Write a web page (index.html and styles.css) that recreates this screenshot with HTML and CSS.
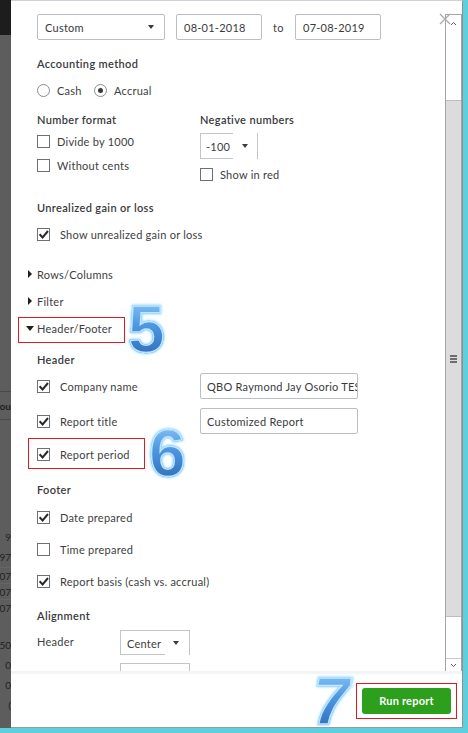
FILE: index.html
```html
<!DOCTYPE html>
<html>
<head>
<meta charset="utf-8">
<link rel="stylesheet" href="styles.css">
</head>
<body>
<div class="screen">
  <div class="bgpage">
    <div class="bg-top"></div>
    <div class="bg-gap g1"></div>
    <div class="bg-row tall bold"><span>Amou</span></div>
    <div class="bg-gap g2"></div>
    <div class="bg-row"><span>9</span></div>
    <div class="bg-row"><span>97</span></div>
    <div class="bg-row line"><span>07</span></div>
    <div class="bg-row line"><span>07</span></div>
    <div class="bg-row line"><span>07</span></div>
    <div class="bg-gap g3"></div>
    <div class="bg-row"><span>350</span></div>
    <div class="bg-row"><span>0</span></div>
    <div class="bg-row"><span>0</span></div>
    <div class="bg-row"><span>(</span></div>
  </div>

  <div class="modal">
    <div class="modal-body">
      <div class="content">
        <div class="date-row">
          <div class="field select-period"><span class="grow">Custom</span><i class="caret"></i></div>
          <div class="field date">08-01-2018</div>
          <span class="to">to</span>
          <div class="field date">07-08-2019</div>
        </div>

        <div class="line heading sp-acct">Accounting method</div>
        <div class="line radios sp-radio">
          <span class="radio first"><span class="rb"></span>Cash</span>
          <span class="radio"><span class="rb on"></span>Accrual</span>
        </div>

        <div class="cols sp-num">
          <div class="col-left">
            <div class="line heading">Number format</div>
            <div class="line check tight sp-6">
              <svg class="cb" viewBox="0 0 13 13"><rect x=".5" y=".5" width="12" height="12" fill="#fff" stroke="#6f7075"/></svg>Divide by 1000
            </div>
            <div class="line check tight sp-8">
              <svg class="cb" viewBox="0 0 13 13"><rect x=".5" y=".5" width="12" height="12" fill="#fff" stroke="#6f7075"/></svg>Without cents
            </div>
          </div>
          <div class="col-right">
            <div class="line heading">Negative numbers</div>
            <div class="neg-select sp-6"><span class="ns-text">-100</span><span class="ns-arrow"><i class="caret"></i></span></div>
            <div class="line check tight sp-7">
              <svg class="cb" viewBox="0 0 13 13"><rect x=".5" y=".5" width="12" height="12" fill="#fff" stroke="#6f7075"/></svg>Show in red
            </div>
          </div>
        </div>

        <div class="line heading sp-17">Unrealized gain or loss</div>
        <div class="line check sp-11">
          <svg class="cb" viewBox="0 0 13 13"><rect x=".5" y=".5" width="12" height="12" fill="#fff" stroke="#6f7075"/><path d="M2.6 6.2 5.6 9.4 11 3" fill="none" stroke="#2a2a2a" stroke-width="2"/></svg>Show unrealized gain or loss
        </div>

        <div class="line toggle sp-24"><i class="tri-right"></i>Rows/Columns</div>
        <div class="line toggle sp-11"><i class="tri-right"></i>Filter</div>
        <div class="line toggle open sp-11"><i class="tri-down"></i>Header/Footer</div>

        <div class="line heading sp-15">Header</div>
        <div class="input-row sp-6">
          <div class="check">
            <svg class="cb" viewBox="0 0 13 13"><rect x=".5" y=".5" width="12" height="12" fill="#fff" stroke="#6f7075"/><path d="M2.6 6.2 5.6 9.4 11 3" fill="none" stroke="#2a2a2a" stroke-width="2"/></svg>Company name
          </div>
          <div class="field text-input">QBO Raymond Jay Osorio TEST Company</div>
        </div>
        <div class="input-row sp-9">
          <div class="check">
            <svg class="cb" viewBox="0 0 13 13"><rect x=".5" y=".5" width="12" height="12" fill="#fff" stroke="#6f7075"/><path d="M2.6 6.2 5.6 9.4 11 3" fill="none" stroke="#2a2a2a" stroke-width="2"/></svg>Report title
          </div>
          <div class="field text-input">Customized Report</div>
        </div>
        <div class="line check sp-12">
          <svg class="cb" viewBox="0 0 13 13"><rect x=".5" y=".5" width="12" height="12" fill="#fff" stroke="#6f7075"/><path d="M2.6 6.2 5.6 9.4 11 3" fill="none" stroke="#2a2a2a" stroke-width="2"/></svg>Report period
        </div>

        <div class="line heading sp-19">Footer</div>
        <div class="line check sp-12">
          <svg class="cb" viewBox="0 0 13 13"><rect x=".5" y=".5" width="12" height="12" fill="#fff" stroke="#6f7075"/><path d="M2.6 6.2 5.6 9.4 11 3" fill="none" stroke="#2a2a2a" stroke-width="2"/></svg>Date prepared
        </div>
        <div class="line check sp-16">
          <svg class="cb" viewBox="0 0 13 13"><rect x=".5" y=".5" width="12" height="12" fill="#fff" stroke="#6f7075"/></svg>Time prepared
        </div>
        <div class="line check sp-16">
          <svg class="cb" viewBox="0 0 13 13"><rect x=".5" y=".5" width="12" height="12" fill="#fff" stroke="#6f7075"/><path d="M2.6 6.2 5.6 9.4 11 3" fill="none" stroke="#2a2a2a" stroke-width="2"/></svg>Report basis (cash vs. accrual)
        </div>

        <div class="line heading sp-18">Alignment</div>
        <div class="align-row sp-7">
          <span class="align-label">Header</span>
          <div class="align-select"><span class="as-text">Center</span><span class="as-arrow"><i class="caret"></i></span></div>
        </div>
        <div class="align-row sp-8">
          <span class="align-label"></span>
          <div class="align-select"><span class="as-text"></span><span class="as-arrow"></span></div>
        </div>
      </div>

      <div class="scrollbar">
        <div class="sb-up"><svg viewBox="0 0 15 16" width="15" height="16"><path d="M5 10 7.5 7.5 10 10" fill="none" stroke="#606060" stroke-width="1"/></svg></div>
        <div class="sb-space top"></div>
        <div class="sb-thumb"><span class="grip"></span><span class="grip"></span><span class="grip"></span></div>
        <div class="sb-space bottom"></div>
        <div class="sb-down"><svg viewBox="0 0 15 12" width="15" height="12"><path d="M5 5 7.5 7.5 10 5" fill="none" stroke="#606060" stroke-width="1"/></svg></div>
      </div>
    </div>

    <div class="modal-footer">
      <div class="run-wrap"><button class="run">Run report</button></div>
    </div>

    <svg class="close" viewBox="0 0 12 12" width="12" height="12"><path d="M1 1 11 11 M11 1 1 11" stroke="#a9abae" stroke-width="1.4" fill="none"/></svg>

    <span class="mark mark-hf"></span>
    <span class="mark mark-rp"></span>
    <span class="num num-5">5</span>
    <span class="num num-6">6</span>
    <span class="num num-7">7</span>
  </div>

  <div class="cyan-r"></div>
  <div class="cyan-b"></div>
</div>
</body>
</html>
```

FILE: styles.css
```css
* { box-sizing: border-box; }
html, body { margin: 0; padding: 0; }
body {
  width: 468px;
  height: 733px;
  overflow: hidden;
  font-family: Lato, "Liberation Sans", sans-serif;
  font-size: 11px;
  letter-spacing: 0.25px;
  color: #3d3e41;
  background: #5ecfdc;
}
.screen {
  display: grid;
  grid-template-columns: 11px 452px 5px;
  grid-template-rows: 728px 5px;
  width: 468px;
  height: 733px;
}

/* page behind the modal */
.bgpage {
  grid-column: 1;
  grid-row: 1;
  background: #5d5d5d;
  display: flex;
  flex-direction: column;
  overflow: hidden;
  font-size: 10px;
  letter-spacing: 0;
  color: #1f1f1f;
}
.bg-top { height: 35px; background: #1d1d1d; flex: none; }
.bg-gap { flex: none; }
.bg-gap.g1 { height: 356px; }
.bg-gap.g2 { height: 107px; }
.bg-gap.g3 { height: 20px; }
.bg-row {
  height: 20px;
  flex: none;
  display: flex;
  justify-content: flex-end;
  align-items: center;
  overflow: hidden;
  white-space: nowrap;
}
.bg-row.tall { height: 29px; border-top: 1px solid #4a4a4a; border-bottom: 1px solid #4a4a4a; }
.bg-row.bold { font-weight: 700; }
.bg-row.line { border-top: 1px solid #666; }

.cyan-r { grid-column: 3; grid-row: 1; background: #5ecfdc; }
.cyan-b { grid-column: 1 / 4; grid-row: 2; background: #5ecfdc; }

/* modal */
.modal {
  grid-column: 2;
  grid-row: 1;
  position: relative;
  background: #fff;
  border-top: 1px solid #cdd0d4;
  border-right: 1px solid #8f8f8f;
  border-bottom: 1px solid #9a9a9a;
  display: flex;
  flex-direction: column;
}
.modal-body { height: 670px; flex: none; display: flex; }
.content {
  flex: 1;
  min-width: 0;
  padding: 13px 0 0 26px;
  overflow: hidden;
}

/* generic rows */
.line { height: 16px; display: flex; align-items: center; white-space: nowrap; }
.heading { font-weight: 600; color: #393a3d; letter-spacing: 0.35px; }

.sp-acct { margin-top: 15px; }
.sp-radio { margin-top: 11px; }
.sp-num { margin-top: 13px; }
.sp-6 { margin-top: 6px; }
.sp-7 { margin-top: 7px; }
.sp-8 { margin-top: 8px; }
.sp-9 { margin-top: 9px; }
.sp-11 { margin-top: 11px; }
.sp-12 { margin-top: 12px; }
.sp-15 { margin-top: 15px; }
.sp-16 { margin-top: 16px; }
.sp-17 { margin-top: 17px; }
.sp-18 { margin-top: 18px; }
.sp-19 { margin-top: 19px; }
.sp-24 { margin-top: 24px; }

/* date row */
.date-row { display: flex; align-items: center; gap: 11px; height: 26px; }
.field {
  height: 26px;
  border: 1px solid #babec5;
  border-radius: 2px;
  padding: 0 7px;
  display: flex;
  align-items: center;
  white-space: nowrap;
  overflow: hidden;
  color: #393a3d;
}
.select-period { width: 128px; padding-right: 10px; }
.grow { flex: 1; }
.date { width: 86px; }
.to { width: 11px; }
.caret {
  display: block;
  width: 0;
  height: 0;
  border-left: 3px solid transparent;
  border-right: 3px solid transparent;
  border-top: 4px solid #393a3d;
}

/* radios */
.radios { gap: 0; }
.radio { display: flex; align-items: center; }
.radio.first { width: 57px; }
.rb {
  width: 13px;
  height: 13px;
  border: 1px solid #8a8c91;
  border-radius: 50%;
  margin-right: 7px;
  display: flex;
  align-items: center;
  justify-content: center;
  flex: none;
}
.rb.on::after {
  content: "";
  width: 5px;
  height: 5px;
  border-radius: 50%;
  background: #393a3d;
}

/* columns */
.cols { display: flex; }
.col-left { width: 163px; }
.col-right { flex: 1; }

/* checkbox */
.check { display: flex; align-items: center; white-space: nowrap; }
.cb { width: 13px; height: 13px; flex: none; margin-right: 10px; }
.check.tight .cb { margin-right: 7px; }

/* negative numbers select */
.neg-select { display: flex; height: 26px; width: 58px; }
.ns-text {
  width: 33px;
  border: 1px solid #c2c5cb;
  border-right: none;
  display: flex;
  align-items: center;
  padding-left: 5px;
}
.ns-arrow {
  flex: 1;
  border-right: 1px solid #c2c5cb;
  display: flex;
  align-items: center;
  padding-left: 9px;
}

/* toggles */
.toggle { position: relative; }
.tri-right {
  position: absolute;
  left: -9px;
  top: 4px;
  width: 0;
  height: 0;
  border-top: 4px solid transparent;
  border-bottom: 4px solid transparent;
  border-left: 4px solid #1f1f1f;
}
.tri-down {
  position: absolute;
  left: -11px;
  top: 6px;
  width: 0;
  height: 0;
  border-left: 4px solid transparent;
  border-right: 4px solid transparent;
  border-top: 5px solid #1f1f1f;
}

/* header inputs */
.input-row { display: flex; align-items: center; height: 26px; }
.input-row .check { width: 163px; }
.text-input { width: 158px; padding: 0 6px; }

/* alignment */
.align-row { display: flex; align-items: center; height: 25px; }
.align-label { width: 83px; margin-top: -3px; }
.align-select { display: flex; width: 70px; height: 25px; border-top: 1px solid #c2c5cb; }
.as-text {
  width: 45px;
  border-left: 1px solid #c2c5cb;
  border-bottom: 1px solid #c2c5cb;
  display: flex;
  align-items: center;
  padding: 2px 0 0 6px;
}
.as-arrow {
  flex: 1;
  border-right: 1px solid #c2c5cb;
  display: flex;
  align-items: center;
  padding: 0 0 0 8px;
}

/* scrollbar */
.scrollbar {
  width: 17px;
  flex: none;
  margin-top: 13px;
  border-left: 1px solid #a5a5a5;
  border-right: 1px solid #a5a5a5;
  display: flex;
  flex-direction: column;
}
.sb-up { height: 16px; border-top: 1px solid #a5a5a5; flex: none; }
.sb-up svg, .sb-down svg { display: block; }
.sb-space.top { height: 70px; flex: none; }
.sb-thumb {
  height: 517px;
  flex: none;
  background: #dcdcdc;
  border-top: 1px solid #bdbdbd;
  border-bottom: 1px solid #bdbdbd;
  display: flex;
  flex-direction: column;
  align-items: center;
  justify-content: center;
  gap: 1px;
}
.grip { width: 7px; height: 2px; background: #6e6e6e; display: block; }
.sb-space.bottom { height: 41px; flex: none; }
.sb-down { flex: 1; border-top: 1px solid #c9c9c9; }

/* footer */
.modal-footer {
  height: 56px;
  flex: none;
  border-top: 3px solid #f3f4f7;
  display: flex;
  justify-content: flex-end;
  align-items: center;
  padding-right: 5px;
}
.run-wrap { border: 1px solid #e3171f; padding: 4px 5px; }
.run {
  display: block;
  width: 89px;
  height: 26px;
  background: #2ca01c;
  color: #fff;
  border: none;
  border-radius: 3px;
  font: 700 11px Lato, "Liberation Sans", sans-serif;
  letter-spacing: 0.2px;
}

/* overlays */
.close { position: absolute; left: 428px; top: 12px; }
.mark { position: absolute; border: 1px solid #e3171f; }
.mark-hf { left: 7px; top: 316px; width: 107px; height: 26px; }
.mark-rp { left: 17px; top: 437px; width: 117px; height: 31px; }

.num {
  position: absolute;
  display: inline-block;
  font: 700 66px/1 "Liberation Sans", Arial, sans-serif;
  letter-spacing: 0;
  background: linear-gradient(180deg, #8fcaf6 0%, #4d97e0 45%, #2a68b4 100%);
  -webkit-background-clip: text;
  background-clip: text;
  color: transparent;
  -webkit-text-fill-color: transparent;
  -webkit-text-stroke: 1.5px #bfe6ff;
  filter: drop-shadow(0 0 1px #9fdcff) drop-shadow(0 0 1px #b5e6ff);
}
.num-5 { left: 117px; top: 295px; }
.num-6 { left: 138px; top: 419px; }
.num-7 { left: 302px; top: 667px; font-style: italic; font-size: 66px; }
```
